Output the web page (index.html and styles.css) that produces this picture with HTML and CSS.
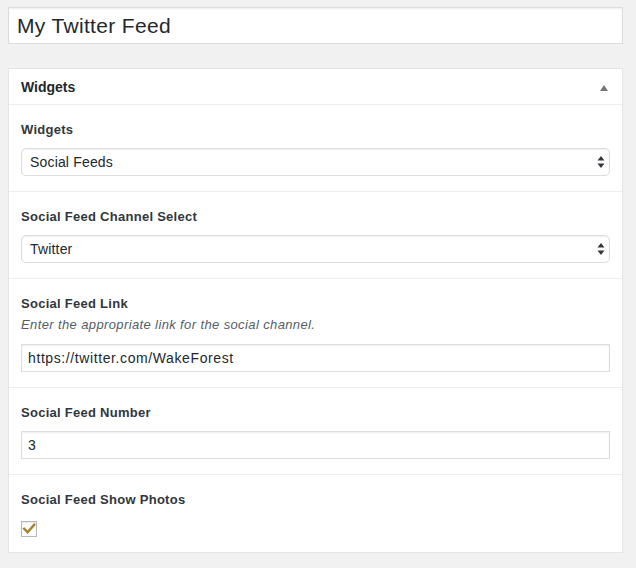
FILE: index.html
```html
<!DOCTYPE html>
<html>
<head>
<meta charset="utf-8">
<link rel="stylesheet" href="styles.css">
</head>
<body>
<div class="page">
  <div class="title-input">My Twitter Feed</div>
  <div class="panel">
    <div class="panel-head">
      <span class="panel-title">Widgets</span>
      <svg class="toggle" width="10" height="8" viewBox="0 0 10 8"><path d="M1 7 L5 1 L9 7 Z" fill="#72777c"/></svg>
    </div>
    <div class="section">
      <div class="label">Widgets</div>
      <div class="select"><span>Social Feeds</span>
        <svg width="8" height="14" viewBox="0 0 8 14"><path d="M0.5 5.5 L4 1 L7.5 5.5 Z M0.5 8.5 L4 13 L7.5 8.5 Z" fill="#32373c"/></svg>
      </div>
    </div>
    <div class="section">
      <div class="label">Social Feed Channel Select</div>
      <div class="select"><span>Twitter</span>
        <svg width="8" height="14" viewBox="0 0 8 14"><path d="M0.5 5.5 L4 1 L7.5 5.5 Z M0.5 8.5 L4 13 L7.5 8.5 Z" fill="#32373c"/></svg>
      </div>
    </div>
    <div class="section">
      <div class="label">Social Feed Link</div>
      <div class="desc">Enter the appropriate link for the social channel.</div>
      <div class="text-input">https://twitter.com/WakeForest</div>
    </div>
    <div class="section">
      <div class="label">Social Feed Number</div>
      <div class="text-input">3</div>
    </div>
    <div class="section last">
      <div class="label">Social Feed Show Photos</div>
      <div class="checkbox">
        <svg width="14" height="14" viewBox="0 0 14 14"><path d="M2.2 6.8 L5.6 10.2 L12.2 2.8" fill="none" stroke="#a8822c" stroke-width="2.4" stroke-linecap="square"/></svg>
      </div>
    </div>
  </div>
</div>
</body>
</html>
```
FILE: styles.css
```css
html, body {
  margin: 0;
  padding: 0;
  background: #f1f1f1;
}
body {
  font-family: "Liberation Sans", Arial, sans-serif;
  color: #23282d;
}
.page {
  padding: 7px 13px 0 8px;
  display: flex;
  flex-direction: column;
}
.title-input {
  height: 35px;
  border: 1px solid #dddddd;
  background: #fff;
  font-size: 21px;
  letter-spacing: 0.33px;
  line-height: 36px;
  padding: 0 8px;
  color: #23282d;
  box-shadow: inset 0 1px 2px rgba(0,0,0,0.07);
}
.panel {
  margin-top: 24px;
  background: #fff;
  border: 1px solid #e5e5e5;
  box-shadow: 0 1px 1px rgba(0,0,0,0.04);
}
.panel-head {
  height: 35px;
  border-bottom: 1px solid #eeeeee;
  display: flex;
  align-items: center;
  justify-content: space-between;
  padding: 0 13px 0 12px;
}
.panel-title {
  font-weight: bold;
  font-size: 14px;
  padding-top: 1px;
}
.toggle {
  margin-top: 2px;
}
.section {
  padding: 16px 12px 15px 12px;
  border-bottom: 1px solid #eeeeee;
}
.section.last {
  border-bottom: none;
}
.label {
  font-weight: bold;
  font-size: 13px;
  letter-spacing: 0.27px;
  line-height: 18px;
  color: #32373c;
  margin-bottom: 9px;
}
.desc {
  font-style: italic;
  font-size: 13px;
  letter-spacing: 0.38px;
  line-height: 18px;
  color: #555d66;
  margin-top: -6px;
  margin-bottom: 10px;
}
.select {
  height: 26px;
  border: 1px solid #dddddd;
  border-radius: 5px;
  box-shadow: inset 0 1px 2px rgba(0,0,0,0.07);
  display: flex;
  align-items: center;
  justify-content: space-between;
  padding: 0 4px 0 8px;
  font-size: 14px;
  letter-spacing: 0.17px;
  color: #23282d;
}
.text-input {
  height: 26px;
  border: 1px solid #dddddd;
  box-shadow: inset 0 1px 2px rgba(0,0,0,0.07);
  display: flex;
  align-items: center;
  padding: 0 6px;
  font-size: 14px;
  letter-spacing: 0.6px;
  color: #23282d;
}
.checkbox {
  margin-top: 12px;
  width: 14px;
  height: 14px;
  border: 1px solid #b4b9be;
  box-shadow: inset 0 1px 2px rgba(0,0,0,0.1);
  display: flex;
  align-items: center;
  justify-content: center;
}
```
